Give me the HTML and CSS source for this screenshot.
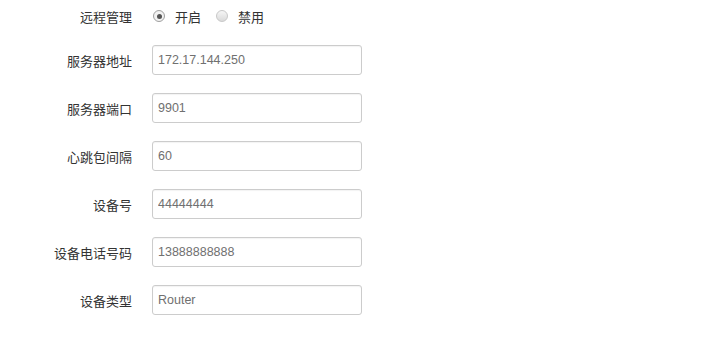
FILE: index.html
```html
<!DOCTYPE html>
<html>
<head>
<meta charset="utf-8">
<link rel="stylesheet" href="styles.css">
</head>
<body>
<div class="form">
  <div class="row row-radio">
    <label class="lbl">远程管理</label>
    <div class="ctl radios">
      <span class="radio checked"></span><span class="opt">开启</span>
      <span class="radio"></span><span class="opt">禁用</span>
    </div>
  </div>
  <div class="row">
    <label class="lbl">服务器地址</label>
    <input class="inp" type="text" value="172.17.144.250">
  </div>
  <div class="row">
    <label class="lbl">服务器端口</label>
    <input class="inp" type="text" value="9901">
  </div>
  <div class="row">
    <label class="lbl">心跳包间隔</label>
    <input class="inp" type="text" value="60">
  </div>
  <div class="row">
    <label class="lbl">设备号</label>
    <input class="inp" type="text" value="44444444">
  </div>
  <div class="row">
    <label class="lbl">设备电话号码</label>
    <input class="inp" type="text" value="13888888888">
  </div>
  <div class="row">
    <label class="lbl">设备类型</label>
    <input class="inp" type="text" value="Router">
  </div>
</div>
</body>
</html>
```
FILE: styles.css
```css
html, body {
  margin: 0;
  padding: 0;
  background: #fff;
}
.form {
  padding-top: 3px;
  font-family: "Noto Sans CJK SC", "Liberation Sans", sans-serif;
  font-size: 13px;
  color: #333;
}
.row {
  display: flex;
  align-items: center;
  height: 30px;
  margin-bottom: 18px;
}
.row-radio {
  height: 26px;
  margin-bottom: 16px;
}
.lbl {
  width: 132px;
  text-align: right;
  margin-right: 20px;
  flex: none;
}
.radios {
  display: flex;
  align-items: center;
}
.radio {
  box-sizing: border-box;
  width: 12px;
  height: 12px;
  border-radius: 50%;
  border: 1px solid #c8c8c8;
  background: linear-gradient(#f6f6f6, #dadada);
  margin-left: 1px;
  margin-right: 10px;
  position: relative;
}
.radio.checked {
  background: #f2f2f2;
  border-color: #a0a0a0;
}
.radio.checked::after {
  content: "";
  position: absolute;
  left: 2.5px;
  top: 2.5px;
  width: 5px;
  height: 5px;
  border-radius: 50%;
  background: #555;
}
.opt {
  margin-right: 14px;
}
.inp {
  box-sizing: border-box;
  width: 210px;
  height: 30px;
  border: 1px solid #ccc;
  border-radius: 3px;
  padding: 0 5px;
  font-family: "Liberation Sans", Arial, sans-serif;
  font-size: 12.5px;
  color: #707070;
  box-shadow: inset 0 1px 1px rgba(0,0,0,0.05);
  outline: none;
  margin: 0;
}
```
